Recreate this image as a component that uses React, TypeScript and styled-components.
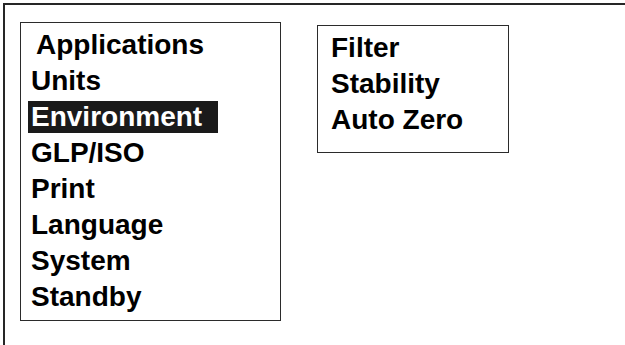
import React from "react";
import styled, { createGlobalStyle } from "styled-components";

const GlobalStyle = createGlobalStyle`
  html, body {
    margin: 0;
    padding: 0;
    background: #ffffff;
  }
  body {
    font-family: "Liberation Sans", Arial, sans-serif;
    overflow: hidden;
  }
`;

const Frame = styled.div`
  box-sizing: border-box;
  margin: 3px 0 0 3px;
  height: calc(100vh - 3px);
  border-top: 2px solid #262626;
  border-left: 2px solid #262626;
  padding: 17px 0 0 15px;
  display: flex;
  align-items: flex-start;
  gap: 36px;
`;

const MenuBox = styled.div<{ $width: number; $height: number; $offset?: number }>`
  box-sizing: border-box;
  width: ${(p) => p.$width}px;
  height: ${(p) => p.$height}px;
  margin-top: ${(p) => p.$offset ?? 0}px;
  border: 1px solid #2b2b2b;
  padding: 4px 0 0 ${(p) => (p.$offset ? 13 : 7)}px;
  display: flex;
  flex-direction: column;
  align-items: flex-start;
`;

const Row = styled.div<{ $indent?: number }>`
  font-size: 28px;
  font-weight: 700;
  line-height: 36px;
  height: 36px;
  color: #000;
  white-space: nowrap;
  padding-left: ${(p) => p.$indent ?? 0}px;
`;

const Highlight = styled.span`
  display: inline-block;
  line-height: 32px;
  background: #1a1a1a;
  color: #ffffff;
  padding: 0 16px 0 3px;
`;

const Plain = styled.span`
  display: inline-block;
  padding-left: 3px;
`;

const mainItems = [
  "Applications",
  "Units",
  "Environment",
  "GLP/ISO",
  "Print",
  "Language",
  "System",
  "Standby",
];

const subItems = ["Filter", "Stability", "Auto Zero"];

export default function App() {
  return (
    <>
      <GlobalStyle />
      <Frame>
        <MenuBox $width={261} $height={299}>
          {mainItems.map((item, i) => (
            <Row key={item} $indent={i === 0 ? 5 : 0}>
              {item === "Environment" ? (
                <Highlight>{item}</Highlight>
              ) : (
                <Plain>{item}</Plain>
              )}
            </Row>
          ))}
        </MenuBox>
        <MenuBox $width={192} $height={128} $offset={3}>
          {subItems.map((item) => (
            <Row key={item}>{item}</Row>
          ))}
        </MenuBox>
      </Frame>
    </>
  );
}
